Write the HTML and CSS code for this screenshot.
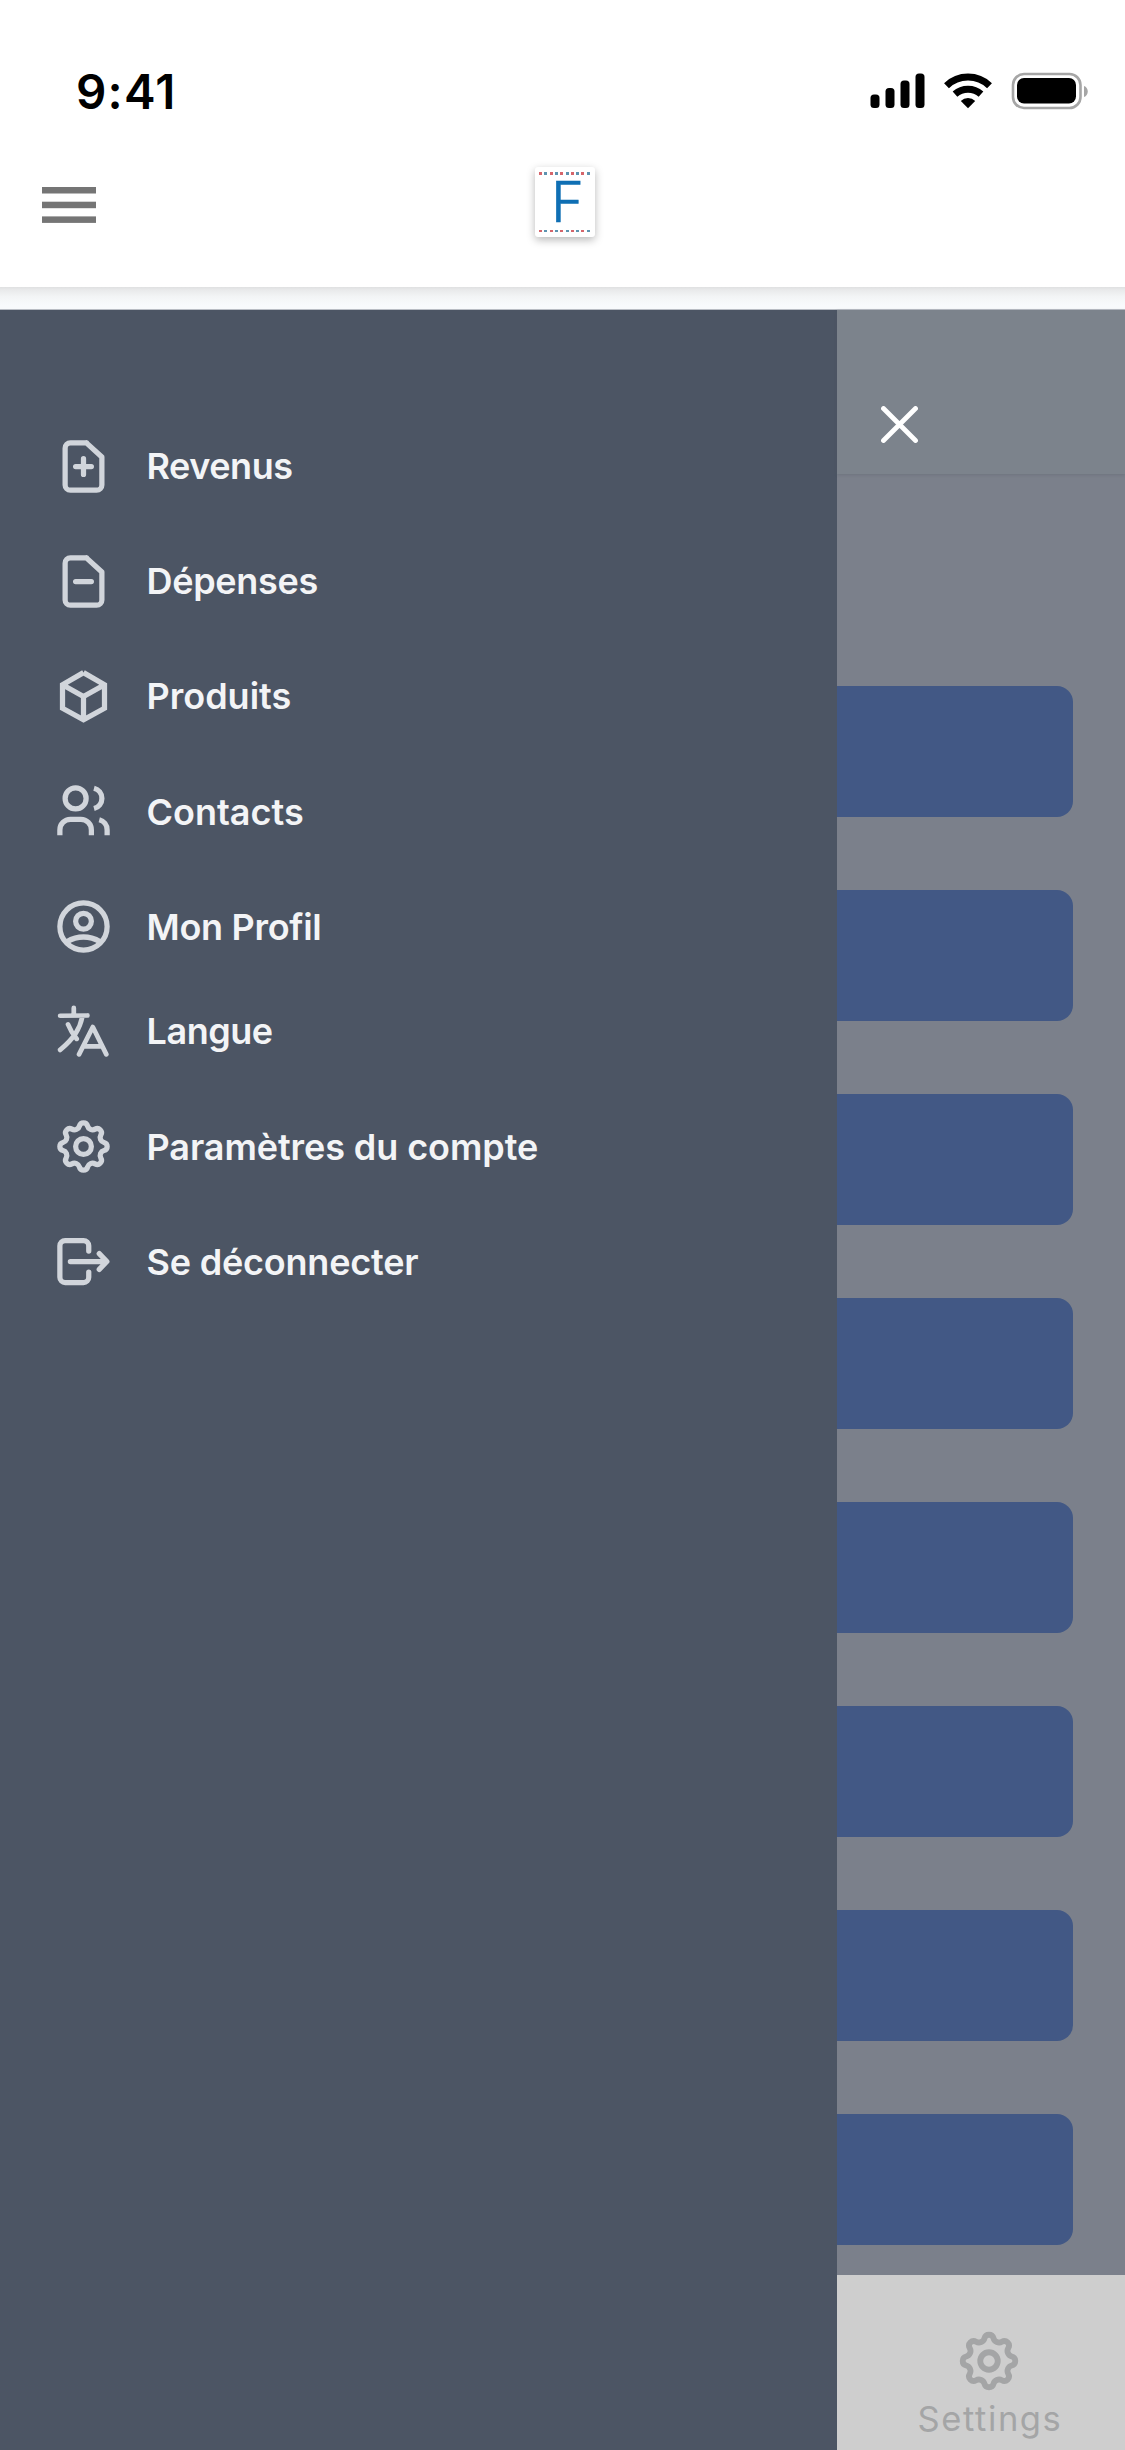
FILE: index.html
```html
<!DOCTYPE html>
<html lang="fr">
<head>
<meta charset="utf-8">
<title>Menu</title>
<link rel="stylesheet" href="styles.css">
</head>
<body>
<svg class="defs" aria-hidden="true">
  <symbol id="gear" viewBox="-12 -12 24 24">
    <path d="M-1.55-7.81A1.6 1.6 0 0 1 1.55-7.81A1.95 1.95 0 0 0 4.427-6.618A1.6 1.6 0 0 1 6.618-4.427A1.95 1.95 0 0 0 7.81-1.55A1.6 1.6 0 0 1 7.81 1.55A1.95 1.95 0 0 0 6.618 4.427A1.6 1.6 0 0 1 4.427 6.618A1.95 1.95 0 0 0 1.55 7.81A1.6 1.6 0 0 1-1.55 7.81A1.95 1.95 0 0 0-4.427 6.618A1.6 1.6 0 0 1-6.618 4.427A1.95 1.95 0 0 0-7.81 1.55A1.6 1.6 0 0 1-7.81-1.55A1.95 1.95 0 0 0-6.618-4.427A1.6 1.6 0 0 1-4.427-6.618A1.95 1.95 0 0 0-1.55-7.81Z"/>
    <circle r="3"/>
  </symbol>
</svg>

<header class="top">
  <div class="status">
    <span class="time">9:41</span>
    <svg class="status-icons" width="220" height="40" viewBox="868 70 220 40">
      <g>
        <rect x="870.5" y="94.5" width="9" height="13.5" rx="3.5"/>
        <rect x="885.5" y="88" width="9" height="20" rx="3.5"/>
        <rect x="900.5" y="80.5" width="9" height="27.5" rx="3.5"/>
        <rect x="915.5" y="73.5" width="9" height="34.5" rx="3.5"/>
      </g>
      <g fill="none" stroke="#000" stroke-width="7">
        <path d="M946.5 85.7A31 31 0 0 1 989.5 85.7"/>
        <path d="M955 94.2A19.5 19.5 0 0 1 981 94.2"/>
      </g>
      <path d="M968 108.3L960.8 100.9A10.5 10.5 0 0 1 975.2 100.9Z"/>
      <rect x="1013" y="74" width="67.5" height="34" rx="11" fill="none" stroke="#a6a6a6" stroke-width="2.6"/>
      <rect x="1017" y="78" width="59" height="25.5" rx="7"/>
      <path d="M1084 86c5 1.500 5 9.500 0 11z" fill="#a6a6a6"/>
    </svg>
  </div>
  <div class="bar">
    <svg class="burger" width="54" height="36" viewBox="0 0 54 36" fill="#757575">
      <rect width="54" height="6.500"/><rect y="14.700" width="54" height="6.500"/><rect y="29.400" width="54" height="6.500"/>
    </svg>
    <div class="logo"><span class="stitch"></span><span class="letter">F</span><span class="stitch"></span></div>
    <span class="spacer"></span>
  </div>
</header>

<main class="main">
  <nav class="drawer">
    <a class="item"><svg class="icon round" viewBox="0 0 24 24"><path d="M13.200 3H7a2 2 0 0 0-2 2v14a2 2 0 0 0 2 2h10a2 2 0 0 0 2-2V8.400L13.100 3M12 9v6M9 12h6"/></svg>Revenus</a>
    <a class="item depenses"><svg class="icon round" viewBox="0 0 24 24"><path d="M13.200 3H7a2 2 0 0 0-2 2v14a2 2 0 0 0 2 2h10a2 2 0 0 0 2-2V8.400L13.100 3M9 12h6"/></svg>Dépenses</a>
    <a class="item produits"><svg class="icon" viewBox="0 0 24 24"><path d="M12 2.900L4 7.500v9L12 20.900l8-4.400v-9L12 2.900M4 7.500l8 4.500 8-4.500M12 12v9"/></svg>Produits</a>
    <a class="item contacts"><svg class="icon" viewBox="0 0 24 24"><circle cx="9" cy="7" r="4"/><path d="M3 21v-2a4 4 0 0 1 4-4h4a4 4 0 0 1 4 4v2M16 3.130a4 4 0 0 1 0 7.750M21 21v-2a4 4 0 0 0-3-3.850"/></svg>Contacts</a>
    <a class="item profil"><svg class="icon" viewBox="0 0 24 24"><circle cx="12" cy="12" r="9"/><circle cx="12" cy="10" r="3"/><path d="M5.600 17.800Q12 14.200 18.400 17.800"/></svg>Mon Profil</a>
    <a class="item langue"><svg class="icon round thin" viewBox="0 0 24 24"><path d="M8.300 3v2.800M3.100 6L13.500 5.900M11.600 6.200C10.600 11 8.500 14.500 3.100 19M6.100 9.300Q7.400 12.500 9.400 14.800M10.300 20.700L15.550 10.300 20.700 20.700M12 17.700h7"/></svg>Langue</a>
    <a class="item parametres"><svg class="icon"><use href="#gear"/></svg>Paramètres du compte</a>
    <a class="item deconnecter"><svg class="icon round" viewBox="0 0 24 24"><path d="M14 8V6a2 2 0 0 0-2-2H5a2 2 0 0 0-2 2v12a2 2 0 0 0 2 2h7a2 2 0 0 0 2-2v-2M7 12h13.600M18 9l2.900 3L18 15"/></svg>Se déconnecter</a>
  </nav>
  <section class="page">
    <div class="page-head">
      <svg class="close" width="37" height="37" viewBox="0 0 37 37"><path d="M2.500 2.500l32 32M34.500 2.500l-32 32"/></svg>
    </div>
    <div class="cards">
      <div class="card"></div><div class="card"></div><div class="card"></div><div class="card"></div>
      <div class="card"></div><div class="card"></div><div class="card"></div><div class="card"></div>
    </div>
    <footer class="tabs">
      <svg class="tab-icon"><use href="#gear"/></svg>
      <span class="tab-label">Settings</span>
    </footer>
  </section>
</main>
</body>
</html>
```
FILE: styles.css
```css
* { box-sizing: border-box; }
body {
  margin: 0;
  width: 1125px;
  height: 2450px;
  overflow: hidden;
  display: flex;
  flex-direction: column;
  background: #fff;
  font-family: Inter, "Liberation Sans", sans-serif;
}
.defs { display: none; }

.top { height: 287px; flex: none; }
.status {
  height: 132px;
  padding: 52px 37px 0 76px;
  display: flex;
  justify-content: space-between;
}
.time { font-size: 47.500px; font-weight: 600; line-height: 80px; letter-spacing: 1.200px; }
.status-icons { margin-top: 18px; }
.bar {
  padding: 35px 42px 0;
  display: grid;
  grid-template-columns: 1fr 60px 1fr;
  margin-left: 5px;
}
.burger { margin: 19.500px 0 0 -5px; }
.logo {
  height: 70px;
  padding: 5px 5px 5px 4px;
  border-radius: 3px;
  background: #fff;
  box-shadow: 0 3px 8px rgba(0, 0, 0, .28);
  display: flex;
  flex-direction: column;
  justify-content: space-between;
}
.stitch {
  height: 2.500px;
  background: repeating-linear-gradient(90deg, #d5656b 0 3px, transparent 3px 5.300px, #5c93b0 5.300px 8.300px, transparent 8.300px 10.600px);
}
.letter {
  padding-left: 6px;
  color: #0f6fb4;
  font-size: 56px;
  font-weight: 300;
  -webkit-text-stroke: .6px #0f6fb4;
  line-height: 50px;
  text-align: center;
}

.main {
  flex: 1;
  display: flex;
  border-top: 23px solid transparent;
  background: linear-gradient(#dfe0e1, #e9eaeb 3px, #f3f5f6 10px, #f8fafc 18px, #f8fafc 22px, #b9bdc4 22px, #b9bdc4 23px) border-box;
}
.drawer {
  width: 837px;
  padding: 124.500px 0 0 52px;
  display: flex;
  flex-direction: column;
  gap: 52.200px;
  background: #4c5564;
}
.item {
  height: 63px;
  flex: none;
  display: flex;
  align-items: center;
  gap: 31.500px;
  color: #f3f4f6;
  font-size: 36px;
  font-weight: 600;
  letter-spacing: -0.450px;
}
.depenses { letter-spacing: -0.300px; }
.produits, .contacts { letter-spacing: 0; }
.profil { letter-spacing: -0.300px; }
.langue { margin-top: -10.500px; }
.parametres { letter-spacing: -0.080px; }
.deconnecter { letter-spacing: -0.200px; }
.icon {
  width: 63px;
  height: 63px;
  fill: none;
  stroke: #d1d5db;
  stroke-width: 2;
}
.round { stroke-linecap: round; stroke-linejoin: round; }
.thin { stroke-width: 1.800; }

.page {
  flex: 1;
  display: flex;
  flex-direction: column;
  background: #7b808b;
}
.page-head {
  height: 164px;
  padding: 96px 0 0 44px;
  background: #7c838c;
  box-shadow: 0 1px 3px rgba(80, 85, 100, .3);
}
.close { fill: none; stroke: #fff; stroke-width: 4.800; stroke-linecap: round; }
.cards {
  padding: 212px 52px 30px 0;
  display: flex;
  flex-direction: column;
  gap: 73px;
}
.card { height: 131px; border-radius: 0 16px 16px 0; background: #425885; }
.tabs {
  flex: 1;
  padding: 51px 0 0 16px;
  display: flex;
  flex-direction: column;
  align-items: center;
  background: #cecece;
}
.tab-icon { width: 70px; height: 70px; fill: none; stroke: #a4a5a6; stroke-width: 2; }
.tab-label {
  padding-left: 2px;
  color: #a4a5a6;
  font-size: 34.500px;
  line-height: 40px;
  margin-top: 3px;
  letter-spacing: 1.600px;
}
```
